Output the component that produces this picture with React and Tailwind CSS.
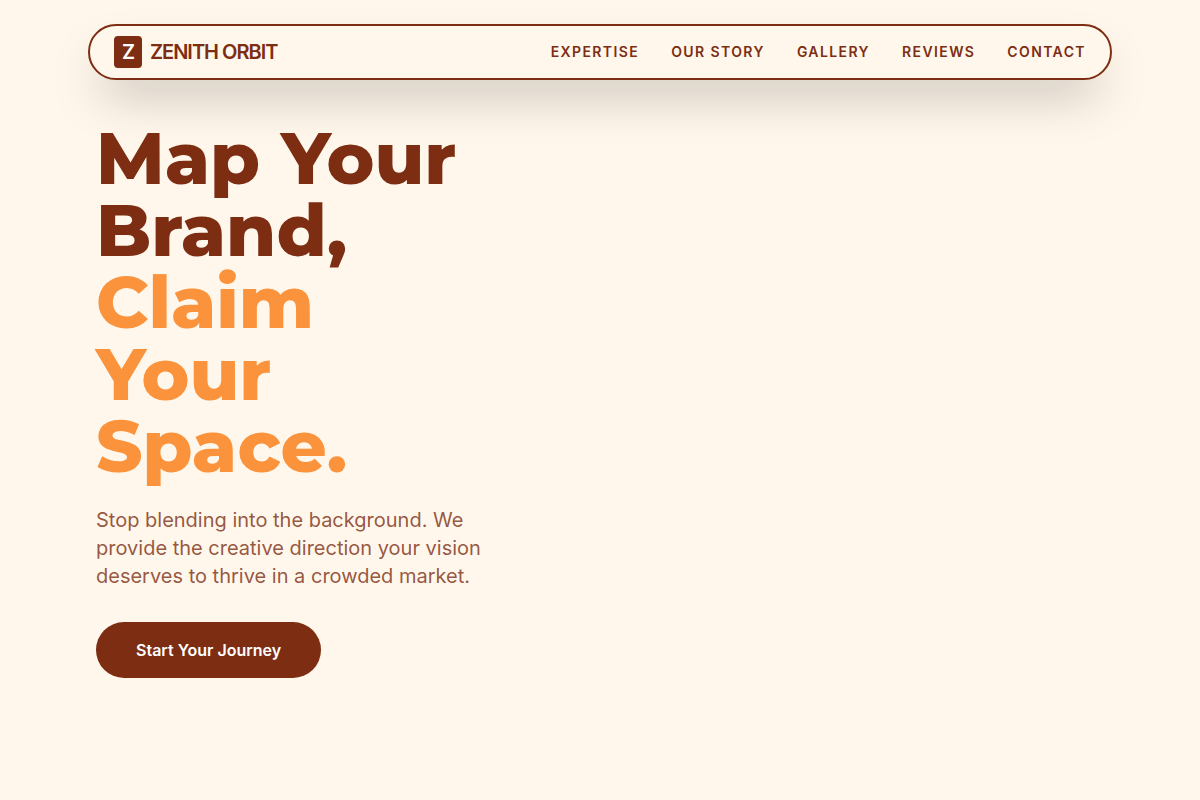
const links = ["Expertise", "Our Story", "Gallery", "Reviews", "Contact"];

function Header() {
  return (
    <header className="px-4 pt-6">
      <nav className="mx-auto flex h-14 max-w-5xl items-center justify-between rounded-full border-2 border-[#7c2d12] bg-[#fff7eb] px-6 shadow-2xl">
        <a href="#home" className="flex items-center gap-2 text-xl font-semibold tracking-tighter text-[#7c2d12]">
          <span className="flex h-8 w-7 items-center justify-center rounded-sm bg-[#7c2d12] text-white">Z</span>
          ZENITH ORBIT
        </a>
        <div className="flex gap-8 text-sm font-semibold uppercase tracking-widest text-[#7c2d12]">
          {links.map((label) => (
            <a key={label} href={"#" + label.toLowerCase().replace(" ", "-")}>{label}</a>
          ))}
        </div>
      </nav>
    </header>
  );
}

export default function App() {
  return (
    <div className="min-h-screen bg-[#fff7eb] font-['Inter',sans-serif]">
      <Header />
      <main className="mx-auto max-w-6xl px-18 pt-[42px]">
        <h1 className="max-w-96 font-['Montserrat','Inter',sans-serif] text-7xl leading-none font-extrabold text-[#7c2d12]">
          Map Your Brand, <span className="block text-[#fb923c]">Claim Your Space.</span>
        </h1>
        <p className="mt-6 max-w-[400px] text-xl text-[#7c2d12]/80">
          Stop blending into the background. We provide the creative direction your vision deserves to thrive in a crowded market.
        </p>
        <button type="button" className="mt-8 h-14 rounded-full bg-[#7c2d12] px-10 font-semibold text-white">Start Your Journey</button>
      </main>
    </div>
  );
}
